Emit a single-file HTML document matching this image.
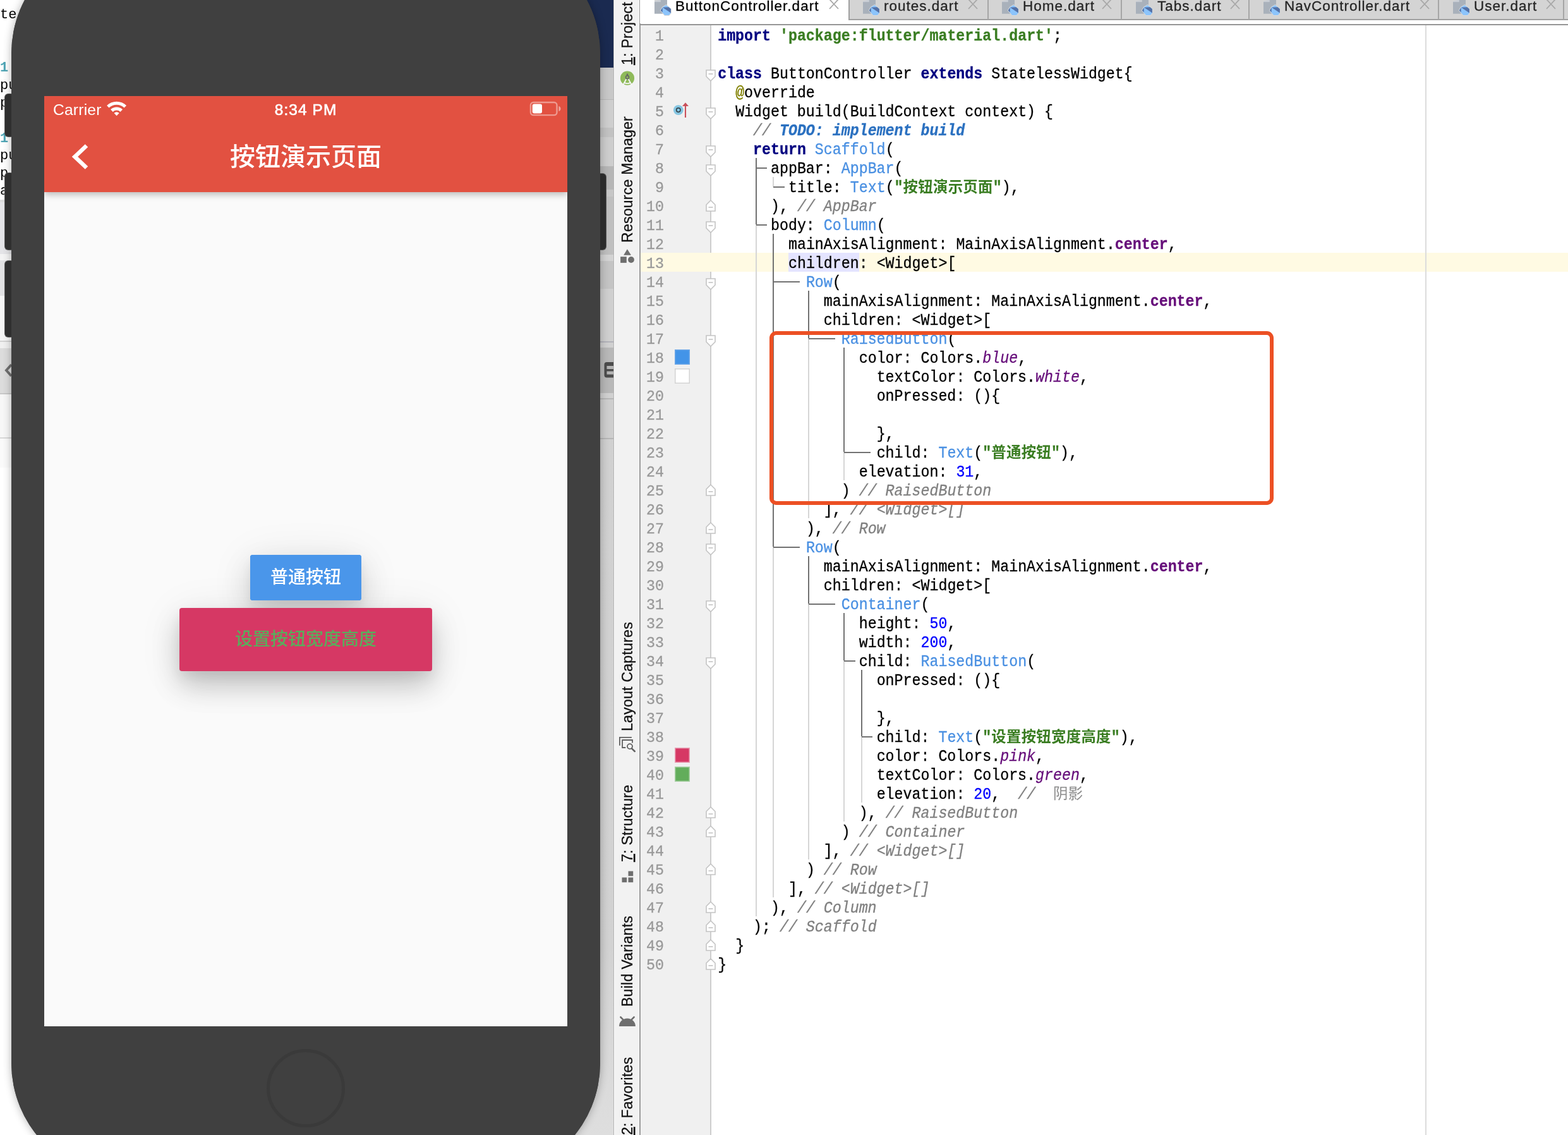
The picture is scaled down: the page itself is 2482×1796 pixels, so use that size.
<!DOCTYPE html>
<html><head><meta charset="utf-8"><title>ButtonController.dart</title>
<style>
html,body{margin:0;padding:0;overflow:hidden}
html{width:2482px;height:1796px}
body{width:2482px;height:1796px;overflow:hidden;position:relative;background:#fff;font-family:"Liberation Sans",sans-serif}
.g{position:absolute}
.abs{position:absolute}
/* ---- code ---- */
.cl{position:absolute;height:30px;line-height:30px;white-space:pre;font-family:"Liberation Mono",monospace;font-size:23.28px;color:#000;-webkit-text-stroke:.3px;transform:scaleY(1.075);transform-origin:0 21.2px}
.k{color:#000080;font-weight:bold}
.s{color:#3a7d22;font-weight:bold}
.c{color:#4a90e2}
.n{color:#0000ff}
.p{color:#660e7a;font-weight:bold}
.pi{color:#660e7a;font-style:italic}
.cm{color:#808080;font-style:italic}
.td{color:#2a70c0;font-style:italic;font-weight:bold}
.an{color:#808000}
.hl{background:#e4e4ff;display:inline-block;height:30px;margin-top:-2.5px;padding-top:2.5px;box-sizing:border-box;vertical-align:top}
.ln{-webkit-text-stroke:.3px;position:absolute;left:1013px;width:38px;text-align:right;height:30px;line-height:30px;font-family:"Liberation Mono",monospace;font-size:23.28px;color:#999}
.cj{display:inline-block;font-family:"Liberation Mono","Noto Sans CJK SC",monospace;font-size:23.4px;letter-spacing:.3px;line-height:30px;-webkit-text-stroke:0;transform:scaleY(.9302);transform-origin:0 21.2px;white-space:nowrap}
/* ---- tool strip ---- */
.vl{position:absolute;transform-origin:0 0;transform:rotate(-90deg);white-space:nowrap;font-size:23px;line-height:24px;height:24px;letter-spacing:.28px;color:#111;-webkit-text-stroke:.3px #111}
.vl u{text-decoration-thickness:1.5px;text-underline-offset:3px}
/* ---- tabs ---- */
.tab{position:absolute;top:0;height:30px;background:#d4d4d4;border-right:2px solid #a8a8a8;box-sizing:border-box;font-size:22px;line-height:22px;color:#333;white-space:nowrap;overflow:hidden}
.tab span{position:absolute;top:-4px}
.tx{position:absolute;top:-3px}
#L{position:absolute;left:0;top:0;width:2482px;height:1796px;overflow:hidden;will-change:transform}
</style></head><body><div id="L">
<div id="leftbg" class="abs" style="left:0;top:0;width:80px;height:1796px;background:#fff;overflow:hidden">
<div class="abs" style="left:0;top:316px;width:80px;height:4px;background:#dcdcdc"></div><div class="abs" style="left:0;top:320px;width:80px;height:82px;background:#e4e4e7"></div>
<div class="abs" style="left:0;top:402px;width:80px;height:10px;background:#f4f4f4"></div>
<div class="abs" style="left:0;top:412px;width:80px;height:56px;background:#e2e2e4"></div>
<div class="abs" style="left:0;top:468px;width:80px;height:72px;background:#f6f6f6"></div>
<div class="abs" style="left:0;top:539px;width:80px;height:2px;background:#d2d2d2"></div>
<div class="abs" style="left:0;top:541px;width:80px;height:10px;background:#f0f0f0"></div>
<div class="abs" style="left:0;top:551px;width:80px;height:71px;background:#dcdcdc"></div>
<div class="abs" style="left:0;top:622px;width:80px;height:2px;background:#c8c8c8"></div>
<div class="abs" style="left:0;top:624px;width:80px;height:68px;background:#f7f7f7"></div>
<div class="abs" style="left:0;top:692px;width:80px;height:2px;background:#d8d8d8"></div>
<div class="abs" style="left:0;top:694px;width:80px;height:46px;background:#fafafa"></div>
</div>
<div class="abs" style="left:0px;top:9.0px;font-family:'Liberation Mono',monospace;font-size:22px;line-height:30px;color:#000;white-space:pre">te</div><div class="abs" style="left:0px;top:92.8px;font-family:'Liberation Mono',monospace;font-size:22px;line-height:30px;color:#4fa5b5;font-weight:bold;white-space:pre">1:</div><div class="abs" style="left:0px;top:120.7px;font-family:'Liberation Mono',monospace;font-size:22px;line-height:30px;color:#000;white-space:pre">pu</div><div class="abs" style="left:0px;top:148.5px;font-family:'Liberation Mono',monospace;font-size:22px;line-height:30px;color:#000;white-space:pre">p</div><div class="abs" style="left:0px;top:204.5px;font-family:'Liberation Mono',monospace;font-size:22px;line-height:30px;color:#4fa5b5;font-weight:bold;white-space:pre">1:</div><div class="abs" style="left:0px;top:232.4px;font-family:'Liberation Mono',monospace;font-size:22px;line-height:30px;color:#000;white-space:pre">pu</div><div class="abs" style="left:0px;top:260.0px;font-family:'Liberation Mono',monospace;font-size:22px;line-height:30px;color:#000;white-space:pre">p</div><div class="abs" style="left:0px;top:288.0px;font-family:'Liberation Mono',monospace;font-size:22px;line-height:30px;color:#000;white-space:pre">a</div><svg class="g" style="left:6px;top:574px" width="14" height="24" viewBox="0 0 14 24"><path d="M12 3L4 12L12 21" fill="none" stroke="#707070" stroke-width="4"/></svg><div id="midbg" class="abs" style="left:900px;top:0;width:72px;height:1796px;background:linear-gradient(#cfcfcf 0,#d2d2d2 1500px,#dedede 1796px);overflow:hidden"><div class="abs" style="left:0;top:0px;width:72px;height:107px;background:#1a2a50"></div><div class="abs" style="left:0;top:107px;width:72px;height:50px;background:#c8c8c8"></div><div class="abs" style="left:0;top:157px;width:72px;height:1px;background:#b6b6b6"></div><div class="abs" style="left:0;top:158px;width:72px;height:44px;background:#cecece"></div><div class="abs" style="left:0;top:202px;width:72px;height:15px;background:#c2c2c2"></div><div class="abs" style="left:0;top:217px;width:72px;height:46px;background:#cdcdcd"></div><div class="abs" style="left:0;top:263px;width:72px;height:37px;background:#b6b6b6"></div><div class="abs" style="left:0;top:300px;width:72px;height:11px;background:#c6c6c6"></div><div class="abs" style="left:0;top:311px;width:72px;height:92px;background:#bfbfbf"></div><div class="abs" style="left:0;top:403px;width:72px;height:10px;background:#d3d3d3"></div><div class="abs" style="left:0;top:413px;width:72px;height:44px;background:#c4c4c4"></div><div class="abs" style="left:0;top:457px;width:72px;height:83px;background:#cfcfcf"></div><div class="abs" style="left:0;top:540px;width:72px;height:2px;background:#b2b2ba"></div><div class="abs" style="left:0;top:542px;width:72px;height:8px;background:#d0d0d0"></div><div class="abs" style="left:0;top:550px;width:72px;height:72px;background:#b8b8b8"></div><div class="abs" style="left:0;top:622px;width:72px;height:8px;background:#d0d0d0"></div><div class="abs" style="left:0;top:630px;width:72px;height:2px;background:#b6b6b6"></div><div class="abs" style="left:0;top:632px;width:72px;height:61px;background:#cecece"></div><div class="abs" style="left:0;top:693px;width:72px;height:2px;background:#b6b6b6"></div><svg class="g" style="left:56px;top:573px" width="18" height="25" viewBox="0 0 18 25"><rect x="0.5" y="0" width="22" height="24.6" rx="4" fill="#4c4c4c"/><rect x="4.5" y="6" width="14" height="5" fill="#b4b4b4"/><rect x="4.5" y="14.5" width="14" height="5" fill="#b4b4b4"/></svg></div>
<div id="phone" class="abs" style="left:18px;top:-97px;width:932px;height:1961px;border-radius:182px;background:#404040;box-shadow:0 0 14px rgba(0,0,0,.30)"></div>
<!-- side buttons -->
<div class="abs" style="left:8px;top:149px;width:14px;height:67px;background:#2f2f2f;border-radius:5px;box-shadow:0 0 0 1px #5a5a5a;z-index:0"></div>
<div class="abs" style="left:8px;top:274px;width:14px;height:121px;background:#2f2f2f;border-radius:5px;box-shadow:0 0 0 1px #5a5a5a"></div>
<div class="abs" style="left:8px;top:413px;width:14px;height:120px;background:#2f2f2f;border-radius:5px;box-shadow:0 0 0 1px #5a5a5a"></div>
<div class="abs" style="left:945px;top:275px;width:14px;height:120px;background:#2b2b2b;border-radius:5px;box-shadow:0 0 0 1px #555"></div>
<div id="phone2" class="abs" style="left:18px;top:-97px;width:932px;height:1961px;border-radius:182px;background:#404040"></div>
<div class="abs" style="left:422px;top:1660px;width:114px;height:114px;border-radius:50%;border:5px solid #3a3a3a"></div>
<!-- screen -->
<div id="screen" class="abs" style="left:70px;top:152px;width:828px;height:1472px;background:#fafafa;overflow:hidden">
  <!-- buttons -->
  <div class="abs" style="left:326px;top:726px;width:176px;height:72px;background:#4a96ea;border-radius:4px;box-shadow:0 22px 50px rgba(0,0,0,.14),0 8px 70px rgba(0,0,0,.09),0 10px 16px rgba(0,0,0,.05)"></div>
  <div class="abs" style="left:214px;top:810px;width:400px;height:100px;background:#d63864;border-radius:4px;box-shadow:0 24px 44px rgba(0,0,0,.18),0 10px 70px rgba(0,0,0,.09),0 10px 18px rgba(0,0,0,.05)"></div>
  <div class="abs" style="left:326px;top:726px;width:176px;height:72px;background:#4a96ea;border-radius:4px"></div>
<div class="abs" style="left:358px;top:745px;width:112px;height:33.6px;line-height:33.6px;font-size:28px;font-weight:500;color:#fff;white-space:nowrap;font-family:'Liberation Sans','Noto Sans CJK SC',sans-serif">普通按钮</div><div class="abs" style="left:302px;top:843px;width:224px;height:33.6px;line-height:33.6px;font-size:28px;font-weight:500;color:#5aad5c;white-space:nowrap;font-family:'Liberation Sans','Noto Sans CJK SC',sans-serif">设置按钮宽度高度</div>
  <!-- app bar -->
  <div class="abs" style="left:0;top:0;width:828px;height:152px;background:#e25141;box-shadow:0 4px 10px rgba(0,0,0,.26)"></div>
  <svg class="g" style="left:98px;top:6px" width="34" height="28" viewBox="0 0 34 28"><path fill="#fff" d="M1.11 8.88A22.5 22.5 0 0 1 32.09 8.88L28.65 12.51A17.5 17.5 0 0 0 4.55 12.51ZM7.17 15.26A13.7 13.7 0 0 1 26.03 15.26L22.52 18.96A8.6 8.6 0 0 0 10.68 18.96ZM12.54 20.92A5.9 5.9 0 0 1 20.66 20.92L16.6 25.2Z"/></svg>
  <svg class="g" style="left:767px;top:8px" width="54" height="26" viewBox="0 0 54 26"><rect x="2.9" y="2" width="41.6" height="20.1" rx="4.4" fill="none" stroke="#fff" stroke-opacity=".42" stroke-width="2.4"/><rect x="5.7" y="4.6" width="15.3" height="14.8" rx="3" fill="#fff"/><path d="M47.5 8v8.2a4.3 4.3 0 0 0 0-8.2z" fill="#fff" fill-opacity=".5"/></svg>
  <svg class="g" style="left:40px;top:74px" width="34" height="44" viewBox="0 0 34 44"><path d="M27 4.5L8.5 22L27 39.5" fill="none" stroke="#fff" stroke-width="6.5"/></svg>
<div class="abs" style="left:294px;top:72px;width:240px;height:48px;line-height:48px;font-size:40px;font-weight:500;color:#fff;white-space:nowrap;font-family:'Liberation Sans','Noto Sans CJK SC',sans-serif">按钮演示页面</div></div>
<div id="ide" class="abs" style="left:972px;top:0;width:1510px;height:1796px;background:#fff"></div>
<div class="abs" style="left:971px;top:0;width:42px;height:1796px;background:#f2f2f2;border-left:1px solid #b4b4b4;box-shadow:inset 1px 0 0 #fbfbfb,inset -1.5px 0 0 #fbfbfb;box-sizing:border-box"></div>
<div class="abs" style="left:1012px;top:0;width:2px;height:1796px;background:#9c9c9c"></div>
<div class="abs" style="left:1014px;top:40px;width:110px;height:1756px;background:#f0f0f0"></div>
<div class="abs" style="left:1124px;top:40px;width:2px;height:1756px;background:#cdcdcd"></div>
<div class="abs" style="left:1014px;top:400px;width:1468px;height:30px;background:#fffae3"></div>
<div class="abs" style="left:2256px;top:40px;width:2px;height:1756px;background:#dcdcdc"></div>
<div class="abs" style="left:1013px;top:0;width:1469px;height:32px;background:#d4d4d4;border-bottom:2px solid #a0a0a0;box-sizing:border-box"></div>
<div class="abs" style="left:1013px;top:0;width:330px;height:37px;background:#fff"></div>
<div class="abs" style="left:1342.5px;top:0;width:2px;height:32px;background:#a0a0a0"></div>
<div class="abs" style="left:1013px;top:37.7px;width:1469px;height:2px;background:#969696"></div>
<svg class="g" style="left:1036px;top:0" width="28" height="26" viewBox="0 0 28 26"><path d="M0 1.8L7.6 0H20V21.7H0Z" fill="#a9b1bb"/><path d="M0 0H9.8V3.2H0Z" fill="#c9ced5"/><path d="M0 1.9L7.4 0H0Z" fill="#d4d4d4"/><path d="M18.5 7.9L25.9 14.3V20.6L23 24.1H16.1L9.8 16.4L12.7 11.4Z" fill="#8cc4fb" stroke="#dadada" stroke-width="1.6" stroke-linejoin="round"/><path d="M18.5 7.9L25.9 14.3V20.6L23 24.1H16.1L9.8 16.4L12.7 11.4Z" fill="#8cc4fb"/><path d="M12.9 11.7L22.4 11.3L25.9 14.3V20.6Z" fill="#5472a8"/><path d="M9.8 16.4L12.7 12V19.6Z" fill="#5472a8"/></svg><svg class="g" style="left:1311px;top:0" width="18" height="16" viewBox="0 0 18 16"><path d="M2 -1L16 14M16 -1L2 14" stroke="#a8a8a8" stroke-width="1.8" fill="none"/></svg><svg class="g" style="left:1366px;top:0" width="28" height="26" viewBox="0 0 28 26"><path d="M0 1.8L7.6 0H20V21.7H0Z" fill="#a9b1bb"/><path d="M0 0H9.8V3.2H0Z" fill="#c9ced5"/><path d="M0 1.9L7.4 0H0Z" fill="#d4d4d4"/><path d="M18.5 7.9L25.9 14.3V20.6L23 24.1H16.1L9.8 16.4L12.7 11.4Z" fill="#8cc4fb" stroke="#dadada" stroke-width="1.6" stroke-linejoin="round"/><path d="M18.5 7.9L25.9 14.3V20.6L23 24.1H16.1L9.8 16.4L12.7 11.4Z" fill="#8cc4fb"/><path d="M12.9 11.7L22.4 11.3L25.9 14.3V20.6Z" fill="#5472a8"/><path d="M9.8 16.4L12.7 12V19.6Z" fill="#5472a8"/></svg><svg class="g" style="left:1531px;top:0" width="18" height="16" viewBox="0 0 18 16"><path d="M2 -1L16 14M16 -1L2 14" stroke="#a8a8a8" stroke-width="1.8" fill="none"/></svg><svg class="g" style="left:1586px;top:0" width="28" height="26" viewBox="0 0 28 26"><path d="M0 1.8L7.6 0H20V21.7H0Z" fill="#a9b1bb"/><path d="M0 0H9.8V3.2H0Z" fill="#c9ced5"/><path d="M0 1.9L7.4 0H0Z" fill="#d4d4d4"/><path d="M18.5 7.9L25.9 14.3V20.6L23 24.1H16.1L9.8 16.4L12.7 11.4Z" fill="#8cc4fb" stroke="#dadada" stroke-width="1.6" stroke-linejoin="round"/><path d="M18.5 7.9L25.9 14.3V20.6L23 24.1H16.1L9.8 16.4L12.7 11.4Z" fill="#8cc4fb"/><path d="M12.9 11.7L22.4 11.3L25.9 14.3V20.6Z" fill="#5472a8"/><path d="M9.8 16.4L12.7 12V19.6Z" fill="#5472a8"/></svg><svg class="g" style="left:1743px;top:0" width="18" height="16" viewBox="0 0 18 16"><path d="M2 -1L16 14M16 -1L2 14" stroke="#a8a8a8" stroke-width="1.8" fill="none"/></svg><svg class="g" style="left:1798px;top:0" width="28" height="26" viewBox="0 0 28 26"><path d="M0 1.8L7.6 0H20V21.7H0Z" fill="#a9b1bb"/><path d="M0 0H9.8V3.2H0Z" fill="#c9ced5"/><path d="M0 1.9L7.4 0H0Z" fill="#d4d4d4"/><path d="M18.5 7.9L25.9 14.3V20.6L23 24.1H16.1L9.8 16.4L12.7 11.4Z" fill="#8cc4fb" stroke="#dadada" stroke-width="1.6" stroke-linejoin="round"/><path d="M18.5 7.9L25.9 14.3V20.6L23 24.1H16.1L9.8 16.4L12.7 11.4Z" fill="#8cc4fb"/><path d="M12.9 11.7L22.4 11.3L25.9 14.3V20.6Z" fill="#5472a8"/><path d="M9.8 16.4L12.7 12V19.6Z" fill="#5472a8"/></svg><svg class="g" style="left:1946px;top:0" width="18" height="16" viewBox="0 0 18 16"><path d="M2 -1L16 14M16 -1L2 14" stroke="#a8a8a8" stroke-width="1.8" fill="none"/></svg><svg class="g" style="left:2000px;top:0" width="28" height="26" viewBox="0 0 28 26"><path d="M0 1.8L7.6 0H20V21.7H0Z" fill="#a9b1bb"/><path d="M0 0H9.8V3.2H0Z" fill="#c9ced5"/><path d="M0 1.9L7.4 0H0Z" fill="#d4d4d4"/><path d="M18.5 7.9L25.9 14.3V20.6L23 24.1H16.1L9.8 16.4L12.7 11.4Z" fill="#8cc4fb" stroke="#dadada" stroke-width="1.6" stroke-linejoin="round"/><path d="M18.5 7.9L25.9 14.3V20.6L23 24.1H16.1L9.8 16.4L12.7 11.4Z" fill="#8cc4fb"/><path d="M12.9 11.7L22.4 11.3L25.9 14.3V20.6Z" fill="#5472a8"/><path d="M9.8 16.4L12.7 12V19.6Z" fill="#5472a8"/></svg><svg class="g" style="left:2246px;top:0" width="18" height="16" viewBox="0 0 18 16"><path d="M2 -1L16 14M16 -1L2 14" stroke="#a8a8a8" stroke-width="1.8" fill="none"/></svg><svg class="g" style="left:2300px;top:0" width="28" height="26" viewBox="0 0 28 26"><path d="M0 1.8L7.6 0H20V21.7H0Z" fill="#a9b1bb"/><path d="M0 0H9.8V3.2H0Z" fill="#c9ced5"/><path d="M0 1.9L7.4 0H0Z" fill="#d4d4d4"/><path d="M18.5 7.9L25.9 14.3V20.6L23 24.1H16.1L9.8 16.4L12.7 11.4Z" fill="#8cc4fb" stroke="#dadada" stroke-width="1.6" stroke-linejoin="round"/><path d="M18.5 7.9L25.9 14.3V20.6L23 24.1H16.1L9.8 16.4L12.7 11.4Z" fill="#8cc4fb"/><path d="M12.9 11.7L22.4 11.3L25.9 14.3V20.6Z" fill="#5472a8"/><path d="M9.8 16.4L12.7 12V19.6Z" fill="#5472a8"/></svg><svg class="g" style="left:2446px;top:0" width="18" height="16" viewBox="0 0 18 16"><path d="M2 -1L16 14M16 -1L2 14" stroke="#a8a8a8" stroke-width="1.8" fill="none"/></svg><div class="abs" style="left:1562.7px;top:0;width:2px;height:31px;background:#a6a6a6"></div><div class="abs" style="left:1773.7px;top:0;width:2px;height:31px;background:#a6a6a6"></div><div class="abs" style="left:1975.7px;top:0;width:2px;height:31px;background:#a6a6a6"></div><div class="abs" style="left:2275.5px;top:0;width:2px;height:31px;background:#a6a6a6"></div><div class="abs" style="left:2474px;top:0;width:2px;height:31px;background:#a6a6a6"></div><div class="abs" style="left:1248px;top:400px;width:111.8px;height:30px;background:#e4e4ff"></div><div class="ln" style="top:42.5px">1</div><div class="ln" style="top:72.5px">2</div><div class="ln" style="top:102.5px">3</div><div class="ln" style="top:132.5px">4</div><div class="ln" style="top:162.5px">5</div><div class="ln" style="top:192.5px">6</div><div class="ln" style="top:222.5px">7</div><div class="ln" style="top:252.5px">8</div><div class="ln" style="top:282.5px">9</div><div class="ln" style="top:312.5px">10</div><div class="ln" style="top:342.5px">11</div><div class="ln" style="top:372.5px">12</div><div class="ln" style="top:402.5px">13</div><div class="ln" style="top:432.5px">14</div><div class="ln" style="top:462.5px">15</div><div class="ln" style="top:492.5px">16</div><div class="ln" style="top:522.5px">17</div><div class="ln" style="top:552.5px">18</div><div class="ln" style="top:582.5px">19</div><div class="ln" style="top:612.5px">20</div><div class="ln" style="top:642.5px">21</div><div class="ln" style="top:672.5px">22</div><div class="ln" style="top:702.5px">23</div><div class="ln" style="top:732.5px">24</div><div class="ln" style="top:762.5px">25</div><div class="ln" style="top:792.5px">26</div><div class="ln" style="top:822.5px">27</div><div class="ln" style="top:852.5px">28</div><div class="ln" style="top:882.5px">29</div><div class="ln" style="top:912.5px">30</div><div class="ln" style="top:942.5px">31</div><div class="ln" style="top:972.5px">32</div><div class="ln" style="top:1002.5px">33</div><div class="ln" style="top:1032.5px">34</div><div class="ln" style="top:1062.5px">35</div><div class="ln" style="top:1092.5px">36</div><div class="ln" style="top:1122.5px">37</div><div class="ln" style="top:1152.5px">38</div><div class="ln" style="top:1182.5px">39</div><div class="ln" style="top:1212.5px">40</div><div class="ln" style="top:1242.5px">41</div><div class="ln" style="top:1272.5px">42</div><div class="ln" style="top:1302.5px">43</div><div class="ln" style="top:1332.5px">44</div><div class="ln" style="top:1362.5px">45</div><div class="ln" style="top:1392.5px">46</div><div class="ln" style="top:1422.5px">47</div><div class="ln" style="top:1452.5px">48</div><div class="ln" style="top:1482.5px">49</div><div class="ln" style="top:1512.5px">50</div><div class="g" style="left:1195.5px;top:355.0px;width:2px;height:1095.0px;background:#d6d6d6"></div><div class="g" style="left:1223.1px;top:865.0px;width:2px;height:555.0px;background:#d6d6d6"></div><div class="g" style="left:1223.1px;top:280.0px;width:2px;height:15.0px;background:#d6d6d6"></div><div class="g" style="left:1279.0px;top:535.0px;width:2px;height:285.0px;background:#d6d6d6"></div><div class="g" style="left:1279.0px;top:955.0px;width:2px;height:405.0px;background:#d6d6d6"></div><div class="g" style="left:1335.0px;top:715.0px;width:2px;height:45.0px;background:#d6d6d6"></div><div class="g" style="left:1335.0px;top:1045.0px;width:2px;height:255.0px;background:#d6d6d6"></div><div class="g" style="left:1363.0px;top:1165.0px;width:2px;height:105.0px;background:#d6d6d6"></div><div class="g" style="left:1195.5px;top:250.0px;width:2px;height:105.0px;background:#727272"></div><div class="g" style="left:1196.5px;top:264.8px;width:17.5px;height:2px;background:#727272"></div><div class="g" style="left:1196.5px;top:354.8px;width:17.5px;height:2px;background:#727272"></div><div class="g" style="left:1224.1px;top:294.8px;width:17.9px;height:2px;background:#727272"></div><div class="g" style="left:1223.1px;top:370.0px;width:2px;height:495.0px;background:#727272"></div><div class="g" style="left:1224.1px;top:444.8px;width:41.9px;height:2px;background:#727272"></div><div class="g" style="left:1224.1px;top:864.8px;width:41.9px;height:2px;background:#727272"></div><div class="g" style="left:1279.0px;top:460.0px;width:2px;height:75.0px;background:#727272"></div><div class="g" style="left:1280.0px;top:534.8px;width:42.0px;height:2px;background:#727272"></div><div class="g" style="left:1335.0px;top:550.0px;width:2px;height:165.0px;background:#727272"></div><div class="g" style="left:1336.0px;top:714.8px;width:42.0px;height:2px;background:#727272"></div><div class="g" style="left:1279.0px;top:880.0px;width:2px;height:75.0px;background:#727272"></div><div class="g" style="left:1280.0px;top:954.8px;width:42.0px;height:2px;background:#727272"></div><div class="g" style="left:1335.0px;top:970.0px;width:2px;height:75.0px;background:#727272"></div><div class="g" style="left:1336.0px;top:1044.8px;width:18.0px;height:2px;background:#727272"></div><div class="g" style="left:1363.0px;top:1060.0px;width:2px;height:105.0px;background:#727272"></div><div class="g" style="left:1364.0px;top:1164.8px;width:17.0px;height:2px;background:#727272"></div><div class="cl k" style="left:1136.20px;top:42.5px">import</div><div class="cl s" style="left:1233.99px;top:42.5px">&#x27;package:</div><div class="cl s" style="left:1359.72px;top:42.5px">flutter/m</div><div class="cl s" style="left:1485.45px;top:42.5px">aterial.d</div><div class="cl s" style="left:1611.18px;top:42.5px">art&#x27;</div><div class="cl" style="left:1667.06px;top:42.5px">;</div><div class="cl k" style="left:1136.20px;top:102.5px">class</div><div class="cl" style="left:1220.02px;top:102.5px">ButtonCo</div><div class="cl" style="left:1331.78px;top:102.5px">ntroller</div><div class="cl k" style="left:1457.51px;top:102.5px">extends</div><div class="cl" style="left:1569.27px;top:102.5px">Stateles</div><div class="cl" style="left:1681.03px;top:102.5px">sWidget{</div><div class="cl an" style="left:1164.14px;top:132.5px">@</div><div class="cl" style="left:1178.11px;top:132.5px">override</div><div class="cl" style="left:1164.14px;top:162.5px">Widget bu</div><div class="cl" style="left:1289.87px;top:162.5px">ild(Build</div><div class="cl" style="left:1415.60px;top:162.5px">Context c</div><div class="cl" style="left:1541.33px;top:162.5px">ontext) {</div><div class="cl cm" style="left:1192.08px;top:192.5px">//</div><div class="cl td" style="left:1233.99px;top:192.5px">TODO: imp</div><div class="cl td" style="left:1359.72px;top:192.5px">lement bu</div><div class="cl td" style="left:1485.45px;top:192.5px">ild</div><div class="cl k" style="left:1192.08px;top:222.5px">return</div><div class="cl c" style="left:1289.87px;top:222.5px">Scaffold</div><div class="cl" style="left:1401.63px;top:222.5px">(</div><div class="cl" style="left:1220.02px;top:252.5px">appBar:</div><div class="cl c" style="left:1331.78px;top:252.5px">AppBar</div><div class="cl" style="left:1415.60px;top:252.5px">(</div><div class="cl" style="left:1247.96px;top:282.5px">title:</div><div class="cl c" style="left:1345.75px;top:282.5px">Text</div><div class="cl" style="left:1401.63px;top:282.5px">(</div><div class="cl s" style="left:1415.60px;top:282.5px">&quot;</div><div class="cl" style="left:1429.57px;top:282.5px"><span class="cj" style="color:#3a7d22;font-weight:bold">按钮演示页面</span></div><div class="cl s" style="left:1571.77px;top:282.5px">&quot;</div><div class="cl" style="left:1585.74px;top:282.5px">),</div><div class="cl" style="left:1220.02px;top:312.5px">),</div><div class="cl cm" style="left:1261.93px;top:312.5px">// AppBar</div><div class="cl" style="left:1220.02px;top:342.5px">body:</div><div class="cl c" style="left:1303.84px;top:342.5px">Column</div><div class="cl" style="left:1387.66px;top:342.5px">(</div><div class="cl" style="left:1247.96px;top:372.5px">mainAxisA</div><div class="cl" style="left:1373.69px;top:372.5px">lignment:</div><div class="cl" style="left:1513.39px;top:372.5px">MainAxis</div><div class="cl" style="left:1625.15px;top:372.5px">Alignment</div><div class="cl" style="left:1750.88px;top:372.5px">.</div><div class="cl p" style="left:1764.85px;top:372.5px">center</div><div class="cl" style="left:1848.67px;top:372.5px">,</div><div class="cl" style="left:1247.96px;top:402.5px">children</div><div class="cl" style="left:1359.72px;top:402.5px">: &lt;Widget</div><div class="cl" style="left:1485.45px;top:402.5px">&gt;[</div><div class="cl c" style="left:1275.90px;top:432.5px">Row</div><div class="cl" style="left:1317.81px;top:432.5px">(</div><div class="cl" style="left:1303.84px;top:462.5px">mainAxisA</div><div class="cl" style="left:1429.57px;top:462.5px">lignment:</div><div class="cl" style="left:1569.27px;top:462.5px">MainAxis</div><div class="cl" style="left:1681.03px;top:462.5px">Alignment</div><div class="cl" style="left:1806.76px;top:462.5px">.</div><div class="cl p" style="left:1820.73px;top:462.5px">center</div><div class="cl" style="left:1904.55px;top:462.5px">,</div><div class="cl" style="left:1303.84px;top:492.5px">children:</div><div class="cl" style="left:1443.54px;top:492.5px">&lt;Widget&gt;</div><div class="cl" style="left:1555.30px;top:492.5px">[</div><div class="cl c" style="left:1331.78px;top:522.5px">RaisedBut</div><div class="cl c" style="left:1457.51px;top:522.5px">ton</div><div class="cl" style="left:1499.42px;top:522.5px">(</div><div class="cl" style="left:1359.72px;top:552.5px">color: Co</div><div class="cl" style="left:1485.45px;top:552.5px">lors.</div><div class="cl pi" style="left:1555.30px;top:552.5px">blue</div><div class="cl" style="left:1611.18px;top:552.5px">,</div><div class="cl" style="left:1387.66px;top:582.5px">textColor</div><div class="cl" style="left:1513.39px;top:582.5px">: Colors.</div><div class="cl pi" style="left:1639.12px;top:582.5px">white</div><div class="cl" style="left:1708.97px;top:582.5px">,</div><div class="cl" style="left:1387.66px;top:612.5px">onPressed</div><div class="cl" style="left:1513.39px;top:612.5px">: (){</div><div class="cl" style="left:1387.66px;top:672.5px">},</div><div class="cl" style="left:1387.66px;top:702.5px">child:</div><div class="cl c" style="left:1485.45px;top:702.5px">Text</div><div class="cl" style="left:1541.33px;top:702.5px">(</div><div class="cl s" style="left:1555.30px;top:702.5px">&quot;</div><div class="cl" style="left:1569.27px;top:702.5px"><span class="cj" style="color:#3a7d22;font-weight:bold">普通按钮</span></div><div class="cl s" style="left:1664.07px;top:702.5px">&quot;</div><div class="cl" style="left:1678.04px;top:702.5px">),</div><div class="cl" style="left:1359.72px;top:732.5px">elevation</div><div class="cl" style="left:1485.45px;top:732.5px">:</div><div class="cl n" style="left:1513.39px;top:732.5px">31</div><div class="cl" style="left:1541.33px;top:732.5px">,</div><div class="cl" style="left:1331.78px;top:762.5px">)</div><div class="cl cm" style="left:1359.72px;top:762.5px">// Raised</div><div class="cl cm" style="left:1485.45px;top:762.5px">Button</div><div class="cl" style="left:1303.84px;top:792.5px">],</div><div class="cl cm" style="left:1345.75px;top:792.5px">// &lt;Widge</div><div class="cl cm" style="left:1471.48px;top:792.5px">t&gt;[]</div><div class="cl" style="left:1275.90px;top:822.5px">),</div><div class="cl cm" style="left:1317.81px;top:822.5px">// Row</div><div class="cl c" style="left:1275.90px;top:852.5px">Row</div><div class="cl" style="left:1317.81px;top:852.5px">(</div><div class="cl" style="left:1303.84px;top:882.5px">mainAxisA</div><div class="cl" style="left:1429.57px;top:882.5px">lignment:</div><div class="cl" style="left:1569.27px;top:882.5px">MainAxis</div><div class="cl" style="left:1681.03px;top:882.5px">Alignment</div><div class="cl" style="left:1806.76px;top:882.5px">.</div><div class="cl p" style="left:1820.73px;top:882.5px">center</div><div class="cl" style="left:1904.55px;top:882.5px">,</div><div class="cl" style="left:1303.84px;top:912.5px">children:</div><div class="cl" style="left:1443.54px;top:912.5px">&lt;Widget&gt;</div><div class="cl" style="left:1555.30px;top:912.5px">[</div><div class="cl c" style="left:1331.78px;top:942.5px">Container</div><div class="cl" style="left:1457.51px;top:942.5px">(</div><div class="cl" style="left:1359.72px;top:972.5px">height:</div><div class="cl n" style="left:1471.48px;top:972.5px">50</div><div class="cl" style="left:1499.42px;top:972.5px">,</div><div class="cl" style="left:1359.72px;top:1002.5px">width:</div><div class="cl n" style="left:1457.51px;top:1002.5px">200</div><div class="cl" style="left:1499.42px;top:1002.5px">,</div><div class="cl" style="left:1359.72px;top:1032.5px">child:</div><div class="cl c" style="left:1457.51px;top:1032.5px">RaisedBut</div><div class="cl c" style="left:1583.24px;top:1032.5px">ton</div><div class="cl" style="left:1625.15px;top:1032.5px">(</div><div class="cl" style="left:1387.66px;top:1062.5px">onPressed</div><div class="cl" style="left:1513.39px;top:1062.5px">: (){</div><div class="cl" style="left:1387.66px;top:1122.5px">},</div><div class="cl" style="left:1387.66px;top:1152.5px">child:</div><div class="cl c" style="left:1485.45px;top:1152.5px">Text</div><div class="cl" style="left:1541.33px;top:1152.5px">(</div><div class="cl s" style="left:1555.30px;top:1152.5px">&quot;</div><div class="cl" style="left:1569.27px;top:1152.5px"><span class="cj" style="color:#3a7d22;font-weight:bold">设置按钮宽度高度</span></div><div class="cl s" style="left:1758.87px;top:1152.5px">&quot;</div><div class="cl" style="left:1772.84px;top:1152.5px">),</div><div class="cl" style="left:1387.66px;top:1182.5px">color: Co</div><div class="cl" style="left:1513.39px;top:1182.5px">lors.</div><div class="cl pi" style="left:1583.24px;top:1182.5px">pink</div><div class="cl" style="left:1639.12px;top:1182.5px">,</div><div class="cl" style="left:1387.66px;top:1212.5px">textColor</div><div class="cl" style="left:1513.39px;top:1212.5px">: Colors.</div><div class="cl pi" style="left:1639.12px;top:1212.5px">green</div><div class="cl" style="left:1708.97px;top:1212.5px">,</div><div class="cl" style="left:1387.66px;top:1242.5px">elevation</div><div class="cl" style="left:1513.39px;top:1242.5px">:</div><div class="cl n" style="left:1541.33px;top:1242.5px">20</div><div class="cl" style="left:1569.27px;top:1242.5px">,</div><div class="cl cm" style="left:1611.18px;top:1242.5px">//</div><div class="cl" style="left:1667.06px;top:1242.5px"><span class="cj" style="color:#8c8c8c">阴影</span></div><div class="cl" style="left:1359.72px;top:1272.5px">),</div><div class="cl cm" style="left:1401.63px;top:1272.5px">// Raised</div><div class="cl cm" style="left:1527.36px;top:1272.5px">Button</div><div class="cl" style="left:1331.78px;top:1302.5px">)</div><div class="cl cm" style="left:1359.72px;top:1302.5px">// Contai</div><div class="cl cm" style="left:1485.45px;top:1302.5px">ner</div><div class="cl" style="left:1303.84px;top:1332.5px">],</div><div class="cl cm" style="left:1345.75px;top:1332.5px">// &lt;Widge</div><div class="cl cm" style="left:1471.48px;top:1332.5px">t&gt;[]</div><div class="cl" style="left:1275.90px;top:1362.5px">)</div><div class="cl cm" style="left:1303.84px;top:1362.5px">// Row</div><div class="cl" style="left:1247.96px;top:1392.5px">],</div><div class="cl cm" style="left:1289.87px;top:1392.5px">// &lt;Widge</div><div class="cl cm" style="left:1415.60px;top:1392.5px">t&gt;[]</div><div class="cl" style="left:1220.02px;top:1422.5px">),</div><div class="cl cm" style="left:1261.93px;top:1422.5px">// Column</div><div class="cl" style="left:1192.08px;top:1452.5px">);</div><div class="cl cm" style="left:1233.99px;top:1452.5px">// Scaffo</div><div class="cl cm" style="left:1359.72px;top:1452.5px">ld</div><div class="cl" style="left:1164.14px;top:1482.5px">}</div><div class="cl" style="left:1136.20px;top:1512.5px">}</div><svg class="g" style="left:1117px;top:109.8px" width="16" height="19" viewBox="0 0 16 19"><path d="M1 1H15V11L8 18L1 11Z" fill="#fff" stroke="#c4c4c4" stroke-width="1.6"/><path d="M4.5 7H11.5" stroke="#c4c4c4" stroke-width="1.6"/></svg><svg class="g" style="left:1117px;top:169.8px" width="16" height="19" viewBox="0 0 16 19"><path d="M1 1H15V11L8 18L1 11Z" fill="#fff" stroke="#c4c4c4" stroke-width="1.6"/><path d="M4.5 7H11.5" stroke="#c4c4c4" stroke-width="1.6"/></svg><svg class="g" style="left:1117px;top:229.8px" width="16" height="19" viewBox="0 0 16 19"><path d="M1 1H15V11L8 18L1 11Z" fill="#fff" stroke="#c4c4c4" stroke-width="1.6"/><path d="M4.5 7H11.5" stroke="#c4c4c4" stroke-width="1.6"/></svg><svg class="g" style="left:1117px;top:259.8px" width="16" height="19" viewBox="0 0 16 19"><path d="M1 1H15V11L8 18L1 11Z" fill="#fff" stroke="#c4c4c4" stroke-width="1.6"/><path d="M4.5 7H11.5" stroke="#c4c4c4" stroke-width="1.6"/></svg><svg class="g" style="left:1117px;top:315.7px" width="16" height="19" viewBox="0 0 16 19"><path d="M1 18H15V8L8 1L1 8Z" fill="#fff" stroke="#c4c4c4" stroke-width="1.6"/><path d="M4.5 12H11.5" stroke="#c4c4c4" stroke-width="1.6"/></svg><svg class="g" style="left:1117px;top:349.8px" width="16" height="19" viewBox="0 0 16 19"><path d="M1 1H15V11L8 18L1 11Z" fill="#fff" stroke="#c4c4c4" stroke-width="1.6"/><path d="M4.5 7H11.5" stroke="#c4c4c4" stroke-width="1.6"/></svg><svg class="g" style="left:1117px;top:439.8px" width="16" height="19" viewBox="0 0 16 19"><path d="M1 1H15V11L8 18L1 11Z" fill="#fff" stroke="#c4c4c4" stroke-width="1.6"/><path d="M4.5 7H11.5" stroke="#c4c4c4" stroke-width="1.6"/></svg><svg class="g" style="left:1117px;top:529.8px" width="16" height="19" viewBox="0 0 16 19"><path d="M1 1H15V11L8 18L1 11Z" fill="#fff" stroke="#c4c4c4" stroke-width="1.6"/><path d="M4.5 7H11.5" stroke="#c4c4c4" stroke-width="1.6"/></svg><svg class="g" style="left:1117px;top:765.7px" width="16" height="19" viewBox="0 0 16 19"><path d="M1 18H15V8L8 1L1 8Z" fill="#fff" stroke="#c4c4c4" stroke-width="1.6"/><path d="M4.5 12H11.5" stroke="#c4c4c4" stroke-width="1.6"/></svg><svg class="g" style="left:1117px;top:825.7px" width="16" height="19" viewBox="0 0 16 19"><path d="M1 18H15V8L8 1L1 8Z" fill="#fff" stroke="#c4c4c4" stroke-width="1.6"/><path d="M4.5 12H11.5" stroke="#c4c4c4" stroke-width="1.6"/></svg><svg class="g" style="left:1117px;top:859.8px" width="16" height="19" viewBox="0 0 16 19"><path d="M1 1H15V11L8 18L1 11Z" fill="#fff" stroke="#c4c4c4" stroke-width="1.6"/><path d="M4.5 7H11.5" stroke="#c4c4c4" stroke-width="1.6"/></svg><svg class="g" style="left:1117px;top:949.8px" width="16" height="19" viewBox="0 0 16 19"><path d="M1 1H15V11L8 18L1 11Z" fill="#fff" stroke="#c4c4c4" stroke-width="1.6"/><path d="M4.5 7H11.5" stroke="#c4c4c4" stroke-width="1.6"/></svg><svg class="g" style="left:1117px;top:1039.8px" width="16" height="19" viewBox="0 0 16 19"><path d="M1 1H15V11L8 18L1 11Z" fill="#fff" stroke="#c4c4c4" stroke-width="1.6"/><path d="M4.5 7H11.5" stroke="#c4c4c4" stroke-width="1.6"/></svg><svg class="g" style="left:1117px;top:1275.7px" width="16" height="19" viewBox="0 0 16 19"><path d="M1 18H15V8L8 1L1 8Z" fill="#fff" stroke="#c4c4c4" stroke-width="1.6"/><path d="M4.5 12H11.5" stroke="#c4c4c4" stroke-width="1.6"/></svg><svg class="g" style="left:1117px;top:1305.7px" width="16" height="19" viewBox="0 0 16 19"><path d="M1 18H15V8L8 1L1 8Z" fill="#fff" stroke="#c4c4c4" stroke-width="1.6"/><path d="M4.5 12H11.5" stroke="#c4c4c4" stroke-width="1.6"/></svg><svg class="g" style="left:1117px;top:1365.7px" width="16" height="19" viewBox="0 0 16 19"><path d="M1 18H15V8L8 1L1 8Z" fill="#fff" stroke="#c4c4c4" stroke-width="1.6"/><path d="M4.5 12H11.5" stroke="#c4c4c4" stroke-width="1.6"/></svg><svg class="g" style="left:1117px;top:1425.7px" width="16" height="19" viewBox="0 0 16 19"><path d="M1 18H15V8L8 1L1 8Z" fill="#fff" stroke="#c4c4c4" stroke-width="1.6"/><path d="M4.5 12H11.5" stroke="#c4c4c4" stroke-width="1.6"/></svg><svg class="g" style="left:1117px;top:1455.7px" width="16" height="19" viewBox="0 0 16 19"><path d="M1 18H15V8L8 1L1 8Z" fill="#fff" stroke="#c4c4c4" stroke-width="1.6"/><path d="M4.5 12H11.5" stroke="#c4c4c4" stroke-width="1.6"/></svg><svg class="g" style="left:1117px;top:1485.7px" width="16" height="19" viewBox="0 0 16 19"><path d="M1 18H15V8L8 1L1 8Z" fill="#fff" stroke="#c4c4c4" stroke-width="1.6"/><path d="M4.5 12H11.5" stroke="#c4c4c4" stroke-width="1.6"/></svg><svg class="g" style="left:1117px;top:1515.7px" width="16" height="19" viewBox="0 0 16 19"><path d="M1 18H15V8L8 1L1 8Z" fill="#fff" stroke="#c4c4c4" stroke-width="1.6"/><path d="M4.5 12H11.5" stroke="#c4c4c4" stroke-width="1.6"/></svg><div class="g" style="left:1068px;top:553px;width:24px;height:24px;background:#4394e8;box-shadow:inset 0 0 0 1.5px #6aa6e8"></div><div class="g" style="left:1068px;top:583px;width:24px;height:24px;background:#fff;box-shadow:inset 0 0 0 1.5px #d4d4d4"></div><div class="g" style="left:1068px;top:1183px;width:24px;height:24px;background:#d63864;box-shadow:inset 0 0 0 1.5px #e8a0b4"></div><div class="g" style="left:1068px;top:1213px;width:24px;height:24px;background:#62ad5b;box-shadow:inset 0 0 0 1.5px #a8cfa4"></div><svg class="g" style="left:1063px;top:160px" width="30" height="30" viewBox="0 0 30 30"><circle cx="10.8" cy="14.1" r="7.9" fill="#86c6e2"/><circle cx="10.8" cy="14.1" r="3.2" fill="none" stroke="#37474f" stroke-width="1.7"/><path d="M22 26V7" fill="none" stroke="#c9505a" stroke-width="2.1"/><path d="M22 2.2L27 8H17Z" fill="#c9505a"/></svg><svg class="g" style="left:980px;top:111px" width="26" height="30" viewBox="0 0 26 30"><circle cx="13" cy="12.7" r="11.1" fill="#8fba5a"/><path d="M13 11L4.6 26.7M13 11L21.7 26.7" stroke="#f4f4f4" stroke-width="1.9" fill="none"/><path d="M7.6 19.4Q13 22.8 18.4 19.4" stroke="#f4f4f4" stroke-width="1.9" fill="none"/><path d="M13 5.6v3" stroke="#666" stroke-width="2.4"/><circle cx="13" cy="11.2" r="2.5" fill="#8fba5a" stroke="#666" stroke-width="1.7"/></svg><svg class="g" style="left:981px;top:393px" width="24" height="25" viewBox="0 0 24 25"><path d="M11.9 1.3L18 10.8H6.1Z" fill="#6e6e6e"/><rect x="1.1" y="13.2" width="9.7" height="9.7" fill="#6e6e6e"/><circle cx="18" cy="18" r="4.9" fill="#6e6e6e"/></svg><svg class="g" style="left:979px;top:1164px" width="28" height="28" viewBox="0 0 28 28"><path d="M1.9 15.7V2.9H20.9M11.3 19H6.1V7H22V11.6" fill="none" stroke="#616161" stroke-width="1.8"/><circle cx="18" cy="17.1" r="4" fill="none" stroke="#616161" stroke-width="1.8"/><path d="M21 20.4L25.8 25" stroke="#616161" stroke-width="2.5" stroke-linecap="round"/></svg><svg class="g" style="left:983.6px;top:1377.6px" width="20" height="20" viewBox="0 0 20 20"><rect x="10.5" y="0.5" width="7.7" height="7.7" fill="#6e6e6e"/><rect x="0.5" y="10.5" width="7.7" height="7.7" fill="#6e6e6e"/><rect x="10.5" y="10.5" width="7.7" height="7.7" fill="#6e6e6e"/></svg><svg class="g" style="left:979px;top:1606.7px" width="28" height="18" viewBox="0 0 28 18"><path d="M1 17A12.95 12.6 0 0 1 26.9 17Z" fill="#6e6e6e"/><path d="M7.5 6.6L3.4 2.5M20.4 6.6L24.6 2.5" stroke="#6e6e6e" stroke-width="2.6" stroke-linecap="round"/></svg><svg class="g" style="left:0;top:0;overflow:visible" width="2482" height="1796" viewBox="0 0 2482 1796"><text x="1069" y="16.8" font-family="Liberation Sans, sans-serif" font-size="22.5" fill="#000" stroke="#000" stroke-width=".3" textLength="226.4" lengthAdjust="spacing">ButtonController.dart</text><text x="1399" y="16.8" font-family="Liberation Sans, sans-serif" font-size="22.5" fill="#262626" stroke="#262626" stroke-width=".3" textLength="117.6" lengthAdjust="spacing">routes.dart</text><text x="1619" y="16.8" font-family="Liberation Sans, sans-serif" font-size="22.5" fill="#262626" stroke="#262626" stroke-width=".3" textLength="113.0" lengthAdjust="spacing">Home.dart</text><text x="1832" y="16.8" font-family="Liberation Sans, sans-serif" font-size="22.5" fill="#262626" stroke="#262626" stroke-width=".3" textLength="100.6" lengthAdjust="spacing">Tabs.dart</text><text x="2033" y="16.8" font-family="Liberation Sans, sans-serif" font-size="22.5" fill="#262626" stroke="#262626" stroke-width=".3" textLength="198.3" lengthAdjust="spacing">NavController.dart</text><text x="2333" y="16.8" font-family="Liberation Sans, sans-serif" font-size="22.5" fill="#262626" stroke="#262626" stroke-width=".3" textLength="99.3" lengthAdjust="spacing">User.dart</text><text transform="translate(1001 103) rotate(-90)" font-family="Liberation Sans, sans-serif" font-size="23" fill="#111" stroke="#111" stroke-width=".3" textLength="99.7" lengthAdjust="spacing"><tspan text-decoration="underline">1</tspan>: Project</text><text transform="translate(1001 384) rotate(-90)" font-family="Liberation Sans, sans-serif" font-size="23" fill="#111" stroke="#111" stroke-width=".3" textLength="199.8" lengthAdjust="spacing">Resource Manager</text><text transform="translate(1001 1157) rotate(-90)" font-family="Liberation Sans, sans-serif" font-size="23" fill="#111" stroke="#111" stroke-width=".3" textLength="172.7" lengthAdjust="spacing">Layout Captures</text><text transform="translate(1001 1364) rotate(-90)" font-family="Liberation Sans, sans-serif" font-size="23" fill="#111" stroke="#111" stroke-width=".3" textLength="122.0" lengthAdjust="spacing"><tspan text-decoration="underline">7</tspan>: Structure</text><text transform="translate(1001 1593) rotate(-90)" font-family="Liberation Sans, sans-serif" font-size="23" fill="#111" stroke="#111" stroke-width=".3" textLength="143.8" lengthAdjust="spacing">Build Variants</text><text transform="translate(1001 1796) rotate(-90)" font-family="Liberation Sans, sans-serif" font-size="23" fill="#111" stroke="#111" stroke-width=".3" textLength="123.2" lengthAdjust="spacing"><tspan text-decoration="underline">2</tspan>: Favorites</text><text x="84" y="181.5" font-family="Liberation Sans, sans-serif" font-size="24.6" fill="#fff" textLength="76.4" lengthAdjust="spacing">Carrier</text><text x="434.7" y="182" font-family="Liberation Sans, sans-serif" font-size="24.4" fill="#fff" stroke="#fff" stroke-width=".7" textLength="97.6" lengthAdjust="spacing">8:34 PM</text></svg>
<div class="abs" style="left:1218px;top:523.8px;width:798.3px;height:275.1px;border-radius:10.8px;box-sizing:border-box;border:6.5px solid #ec5024"></div>
</div></body></html>
